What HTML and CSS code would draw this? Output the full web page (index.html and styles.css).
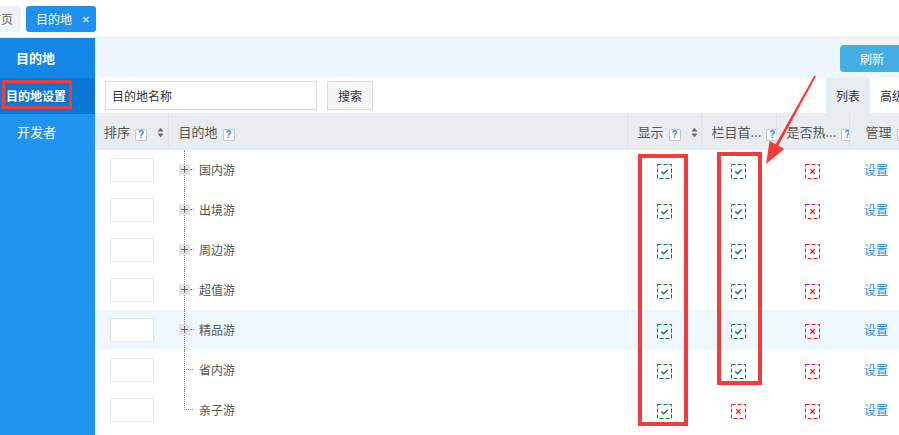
FILE: index.html
```html
<!DOCTYPE html>
<html lang="zh-CN">
<head>
    <meta charset="UTF-8">
    <title>目的地设置</title>
    <link rel="stylesheet" href="styles.css">
</head>
<body>
    <svg class="defs" width="0" height="0">
        <symbol id="ok" viewBox="0 0 15 15">
            <rect x="0.5" y="0.5" width="14" height="14" fill="none" stroke="#17763f" stroke-dasharray="4 2"/>
            <path d="M4.3 7.6 6.6 9.8 10.7 5.7" fill="none" stroke="#17763f" stroke-width="1.4"/>
        </symbol>
        <symbol id="no" viewBox="0 0 15 15">
            <rect x="0.5" y="0.5" width="14" height="14" fill="none" stroke="#ea1f25" stroke-dasharray="4 2"/>
            <path d="M5.3 5.3 9.7 9.7 M9.7 5.3 5.3 9.7" fill="none" stroke="#ea1f25" stroke-width="1.3"/>
        </symbol>
        <symbol id="sort" viewBox="0 0 7 11">
            <polygon points="0.5,4.5 3.5,0.8 6.5,4.5" fill="#6a6a6a"/>
            <polygon points="0.5,6.5 3.5,10.2 6.5,6.5" fill="#6a6a6a"/>
        </symbol>
    </svg>

    <div class="page">
        <div class="tabs">
            <span class="tab first">首页</span>
            <span class="tab active">目的地<i class="close">×</i></span>
        </div>

        <div class="layout">
            <aside class="sidebar">
                <div class="side-title">目的地</div>
                <div class="side-item active">目的地设置</div>
                <div class="side-item">开发者</div>
            </aside>

            <main class="main">
                <div class="toolbar">
                    <button class="btn-refresh">刷新</button>
                </div>
                <div class="search-bar">
                    <input class="search-input" type="text" value="目的地名称">
                    <button class="btn-search">搜索</button>
                    <div class="view-tabs">
                        <span class="view-tab active">列表</span>
                        <span class="view-tab">高级</span>
                    </div>
                </div>

                <table class="grid">
                    <colgroup>
                        <col style="width: 73px">
                        <col style="width: 459px">
                        <col style="width: 74px">
                        <col style="width: 75px">
                        <col style="width: 73px">
                        <col style="width: 80px">
                    </colgroup>
                    <thead>
                        <tr>
                            <th class="first-col">排序<span class="help">?</span><svg class="sort-ico"><use href="#sort"/></svg></th>
                            <th>目的地<span class="help">?</span></th>
                            <th>显示<span class="help">?</span><svg class="sort-ico"><use href="#sort"/></svg></th>
                            <th>栏目首...<span class="help">?</span></th>
                            <th>是否热...<span class="help">?</span></th>
                            <th class="manage">管理<span class="help">?</span></th>
                        </tr>
                    </thead>
                    <tbody>
                        <tr>
                            <td><div class="sort-box"></div></td>
                            <td class="tree"><div class="node"><span class="expander"></span><span class="dots"></span>国内游</div></td>
                            <td class="chk"><svg><use href="#ok"/></svg></td>
                            <td class="chk"><svg><use href="#ok"/></svg></td>
                            <td class="chk"><svg><use href="#no"/></svg></td>
                            <td class="link">设置</td>
                        </tr>
                        <tr>
                            <td><div class="sort-box"></div></td>
                            <td class="tree"><div class="node"><span class="expander"></span><span class="dots"></span>出境游</div></td>
                            <td class="chk"><svg><use href="#ok"/></svg></td>
                            <td class="chk"><svg><use href="#ok"/></svg></td>
                            <td class="chk"><svg><use href="#no"/></svg></td>
                            <td class="link">设置</td>
                        </tr>
                        <tr>
                            <td><div class="sort-box"></div></td>
                            <td class="tree"><div class="node"><span class="expander"></span><span class="dots"></span>周边游</div></td>
                            <td class="chk"><svg><use href="#ok"/></svg></td>
                            <td class="chk"><svg><use href="#ok"/></svg></td>
                            <td class="chk"><svg><use href="#no"/></svg></td>
                            <td class="link">设置</td>
                        </tr>
                        <tr>
                            <td><div class="sort-box"></div></td>
                            <td class="tree"><div class="node"><span class="expander"></span><span class="dots"></span>超值游</div></td>
                            <td class="chk"><svg><use href="#ok"/></svg></td>
                            <td class="chk"><svg><use href="#ok"/></svg></td>
                            <td class="chk"><svg><use href="#no"/></svg></td>
                            <td class="link">设置</td>
                        </tr>
                        <tr class="hl">
                            <td><div class="sort-box"></div></td>
                            <td class="tree"><div class="node"><span class="expander"></span><span class="dots"></span>精品游</div></td>
                            <td class="chk"><svg><use href="#ok"/></svg></td>
                            <td class="chk"><svg><use href="#ok"/></svg></td>
                            <td class="chk"><svg><use href="#no"/></svg></td>
                            <td class="link">设置</td>
                        </tr>
                        <tr>
                            <td><div class="sort-box"></div></td>
                            <td class="tree"><div class="node"><span class="dots leaf"></span>省内游</div></td>
                            <td class="chk"><svg><use href="#ok"/></svg></td>
                            <td class="chk"><svg><use href="#ok"/></svg></td>
                            <td class="chk"><svg><use href="#no"/></svg></td>
                            <td class="link">设置</td>
                        </tr>
                        <tr>
                            <td><div class="sort-box"></div></td>
                            <td class="tree last"><div class="node"><span class="dots leaf"></span>亲子游</div></td>
                            <td class="chk"><svg><use href="#ok"/></svg></td>
                            <td class="chk"><svg><use href="#no"/></svg></td>
                            <td class="chk"><svg><use href="#no"/></svg></td>
                            <td class="link">设置</td>
                        </tr>
                    </tbody>
                </table>
            </main>
        </div>

        <!-- red annotations drawn over the screenshot -->
        <div class="mark mark-side"></div>
        <div class="mark mark-show"></div>
        <div class="mark mark-home"></div>
        <svg class="arrow" width="899" height="435">
            <polygon points="815.9,76.5 778.3,145.7 784.4,149.1 766,164 769.6,140.9 775.7,144.3 814.3,75.6" fill="#f23b3b"/>
        </svg>
    </div>
</body>
</html>
```

FILE: styles.css
```css
* {
    box-sizing: border-box;
}
html, body {
    margin: 0;
    overflow: hidden;
}
body {
    font-family: "Noto Sans CJK SC", "Microsoft YaHei", sans-serif;
    font-size: 12px;
    color: #555;
    background: #fff;
}
.defs {
    position: absolute;
}
.page {
    position: relative;
    width: 940px;
}

/* tab bar */
.tabs {
    height: 38px;
    display: flex;
    align-items: center;
    gap: 5px;
    border-bottom: 1px solid #e4ebf3;
}
.tab {
    height: 26px;
    line-height: 26px;
    padding: 0 8px;
    border-radius: 3px;
    background: #eef1f6;
    color: #666;
}
.tab.first {
    margin-left: -19px;
}
.tab.active {
    padding: 0 6px 0 10px;
    background: #1f92f0;
    color: #fff;
}
.close {
    font-style: normal;
    font-family: "Liberation Sans", sans-serif;
    font-size: 13px;
    margin-left: 10px;
}

/* sidebar */
.layout {
    display: flex;
    min-height: 397px;
}
.sidebar {
    width: 95px;
    flex: none;
    background: #2094f0;
    color: #fff;
    font-size: 13px;
}
.side-title {
    height: 40px;
    line-height: 40px;
    padding-left: 16px;
    background: #1486e8;
    font-weight: bold;
}
.side-item {
    height: 36px;
    line-height: 36px;
    padding-left: 17px;
}
.side-item.active {
    padding-left: 6px;
    background: #0877d5;
    font-size: 12px;
    font-weight: bold;
}

/* main */
.main {
    flex: 1;
}
.toolbar {
    height: 40px;
    background: #eef6fe;
    display: flex;
    align-items: center;
    justify-content: flex-end;
    padding-right: 36px;
}
.btn-refresh {
    width: 64px;
    height: 27px;
    border: none;
    border-radius: 4px;
    background: #45aee3;
    color: #fff;
    font: inherit;
}
.search-bar {
    height: 35px;
    display: flex;
    align-items: center;
    padding-left: 10px;
}
.search-input {
    width: 212px;
    height: 29px;
    border: 1px solid #dcdcdc;
    padding: 0 0 0 6px;
    font: inherit;
    color: #333;
    outline: none;
}
.btn-search {
    margin-left: 10px;
    width: 46px;
    height: 29px;
    border: 1px solid #dcdcdc;
    background: #f5f5f5;
    color: #333;
    font: inherit;
}
.view-tabs {
    margin-left: auto;
    margin-right: 26px;
    display: flex;
    height: 100%;
}
.view-tab {
    width: 44px;
    line-height: 35px;
    text-align: center;
    color: #333;
}
.view-tab.active {
    background: #e9ecf1;
}

/* table */
.grid {
    border-collapse: collapse;
    table-layout: fixed;
    width: 834px;
}
.grid th {
    height: 37px;
    padding: 0 0 0 10px;
    background: #e9edf2;
    border-right: 1px solid #dde2e8;
    text-align: left;
    font-weight: normal;
    font-size: 13px;
    color: #555;
    white-space: nowrap;
    overflow: hidden;
}
.grid th.first-col {
    padding-left: 9px;
}
.grid th.manage {
    padding-left: 16px;
    border-right: none;
}
.help {
    display: inline-block;
    width: 12px;
    height: 12px;
    margin-left: 5px;
    border: 1px solid #c6c6c6;
    border-radius: 1px;
    background: #fff;
    color: #1a8fe6;
    font: bold 10px/10px "Liberation Sans", sans-serif;
    text-align: center;
    vertical-align: -1px;
}
.sort-ico {
    width: 7px;
    height: 11px;
    margin-left: 10px;
    vertical-align: -1px;
}
.grid td {
    height: 40px;
    padding: 0;
}
.grid tr.hl td {
    background: #eff7ff;
}
.sort-box {
    width: 44px;
    height: 24px;
    margin: 0 auto;
    border: 1px solid #e8e8e8;
    background: #fff;
}

/* tree column */
.tree {
    position: relative;
}
.tree::before {
    content: "";
    position: absolute;
    left: 16px;
    top: 0;
    bottom: 0;
    border-left: 1px dotted #8a8a8a;
}
.tree.last::before {
    bottom: 50%;
}
.node {
    display: flex;
    align-items: center;
    padding-left: 11px;
    padding-bottom: 1px;
    color: #555;
}
.expander {
    position: relative;
    width: 11px;
    height: 11px;
    background:
        linear-gradient(#666, #666) center / 7px 1px no-repeat,
        linear-gradient(#666, #666) center / 1px 7px no-repeat,
        #e2e2e2;
}
.dots {
    width: 4px;
    margin-right: 5px;
    border-top: 1px dotted #8a8a8a;
}
.dots.leaf {
    width: 9px;
    margin-left: 5px;
    margin-right: 6px;
}

.chk {
    text-align: center;
}
.chk svg {
    width: 15px;
    height: 15px;
    vertical-align: middle;
}
.grid td.link {
    padding-left: 15px;
    padding-bottom: 1px;
    color: #1b8ddb;
}

/* annotations */
.mark {
    position: absolute;
    border: 4px solid #f03c3c;
}
.mark-side {
    left: 2px;
    top: 80px;
    width: 70px;
    height: 29px;
    border-width: 3px;
}
.mark-show {
    left: 638px;
    top: 154px;
    width: 50px;
    height: 272px;
}
.mark-home {
    left: 717px;
    top: 152px;
    width: 45px;
    height: 233px;
}
.arrow {
    position: absolute;
    left: 0;
    top: 0;
    pointer-events: none;
}
```
